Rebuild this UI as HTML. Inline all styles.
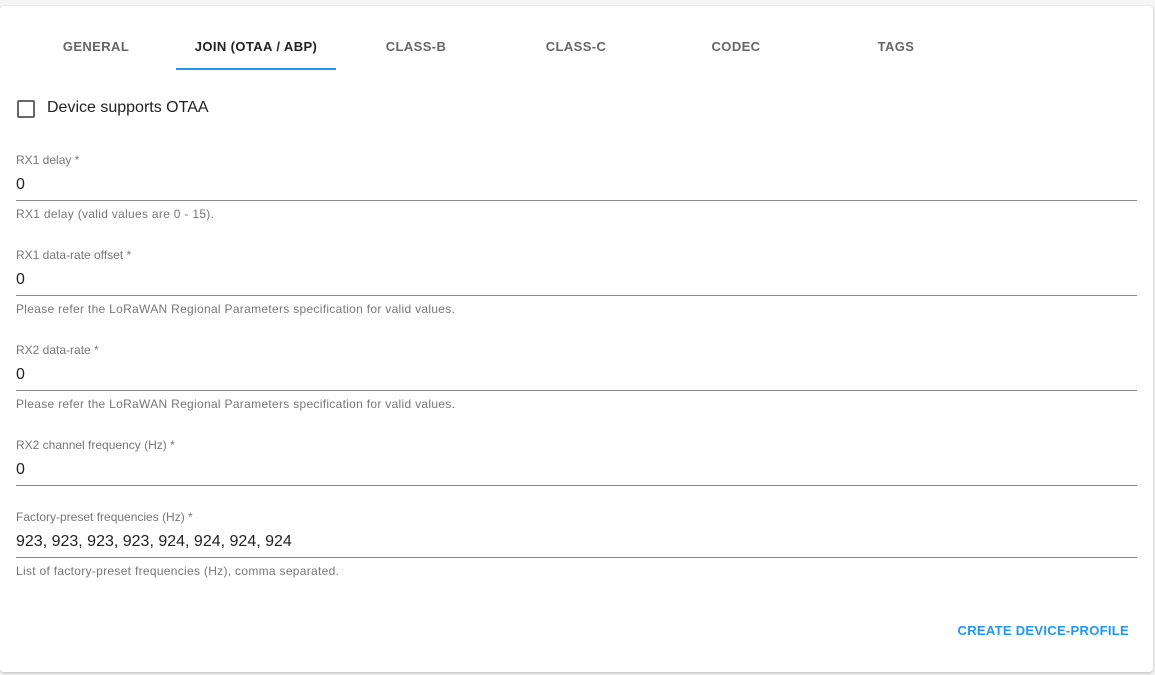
<!DOCTYPE html><html><head><style>
body{margin:0;background:#f5f5f5;font-family:"Liberation Sans",sans-serif;width:1155px;height:675px;overflow:hidden}
.card{position:absolute;left:0;top:6px;width:1153px;height:666px;background:#fff;border-radius:4px;box-shadow:0 1px 3px rgba(0,0,0,.25)}
.tab{position:absolute;top:33px;width:160px;text-align:center;font-size:13px;letter-spacing:.4px;color:#666;font-weight:bold;}
.a{color:#222}
.ul{position:absolute;left:176px;top:62px;width:160px;height:2px;background:#2196f3}
.lab{position:absolute;left:16px;font-size:12px;color:#777}
.val{position:absolute;left:16px;font-size:16px;color:#222}
.line{position:absolute;left:16px;width:1121px;height:1px;background:#8a8a8a}
.help{position:absolute;left:16px;font-size:12px;color:#777;letter-spacing:.3px}
</style></head><body><div class="card">
<div class="tab" style="left:16px">GENERAL</div>
<div class="tab a" style="left:176px">JOIN (OTAA / ABP)</div>
<div class="tab" style="left:336px">CLASS-B</div>
<div class="tab" style="left:496px">CLASS-C</div>
<div class="tab" style="left:656px">CODEC</div>
<div class="tab" style="left:816px">TAGS</div>
<div class="ul"></div>
<div style="position:absolute;left:17px;top:94px;width:14px;height:14px;border:2px solid #666;border-radius:2px"></div>
<div style="position:absolute;left:47px;top:93px;font-size:16px;color:#222">Device supports OTAA</div>

<div class="lab" style="top:147px">RX1 delay *</div><div class="val" style="top:170px">0</div><div class="line" style="top:194px"></div><div class="help" style="top:201px">RX1 delay (valid values are 0 - 15).</div>
<div class="lab" style="top:242px">RX1 data-rate offset *</div><div class="val" style="top:265px">0</div><div class="line" style="top:289px"></div><div class="help" style="top:296px">Please refer the LoRaWAN Regional Parameters specification for valid values.</div>
<div class="lab" style="top:337px">RX2 data-rate *</div><div class="val" style="top:360px">0</div><div class="line" style="top:384px"></div><div class="help" style="top:391px">Please refer the LoRaWAN Regional Parameters specification for valid values.</div>
<div class="lab" style="top:432px">RX2 channel frequency (Hz) *</div><div class="val" style="top:455px">0</div><div class="line" style="top:479px"></div>
<div class="lab" style="top:504px">Factory-preset frequencies (Hz) *</div><div class="val" style="top:527px">923, 923, 923, 923, 924, 924, 924, 924</div><div class="line" style="top:551px"></div><div class="help" style="top:558px">List of factory-preset frequencies (Hz), comma separated.</div>
<div style="position:absolute;right:24px;top:617px;font-size:13px;font-weight:bold;color:#2196f3;letter-spacing:.3px">CREATE DEVICE-PROFILE</div>
</div></body></html>
